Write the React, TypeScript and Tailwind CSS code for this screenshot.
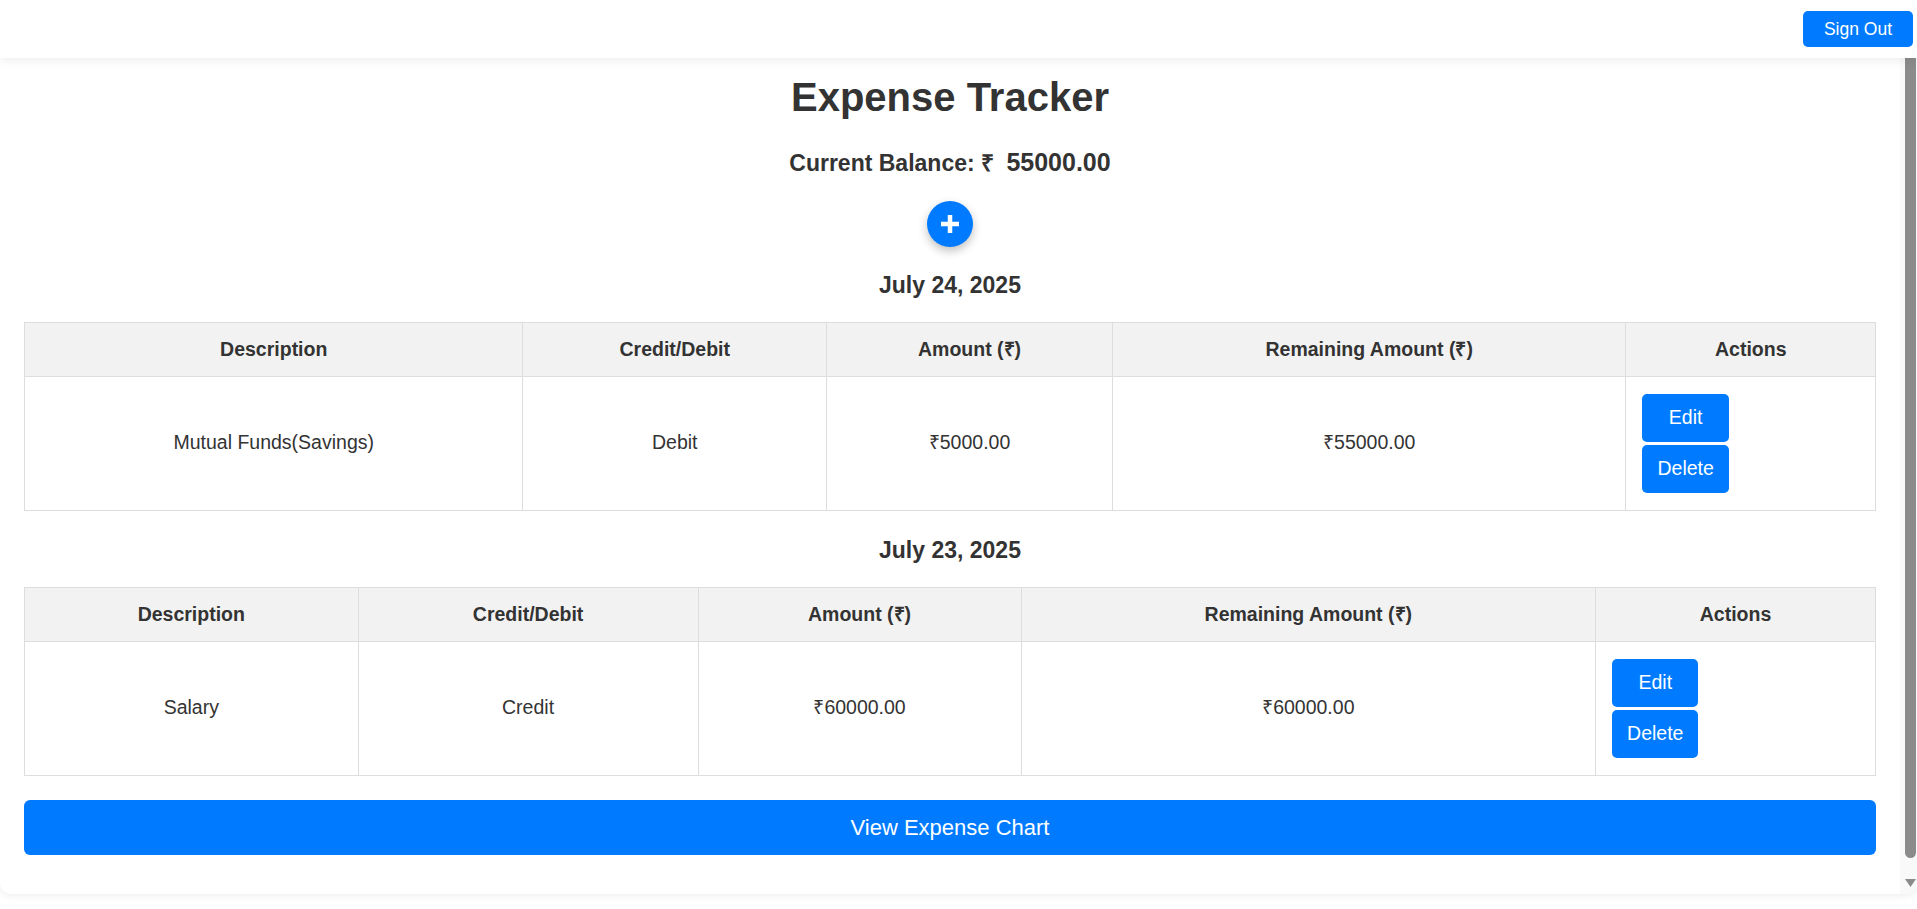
import React from 'react';

type Txn = {
    date: string;
    description: string;
    type: string;
    amount: string;
    remaining: string;
    widths: string[];
};

const transactions: Txn[] = [
    {
        date: 'July 24, 2025',
        description: 'Mutual Funds(Savings)',
        type: 'Debit',
        amount: '₹5000.00',
        remaining: '₹55000.00',
        widths: ['w-[26.93%]', 'w-[16.4%]', 'w-[15.45%]', 'w-[27.74%]', 'w-[13.48%]'],
    },
    {
        date: 'July 23, 2025',
        description: 'Salary',
        type: 'Credit',
        amount: '₹60000.00',
        remaining: '₹60000.00',
        widths: ['w-[18.02%]', 'w-[18.37%]', 'w-[17.45%]', 'w-[31.04%]', 'w-[15.12%]'],
    },
];

const headers = ['Description', 'Credit/Debit', 'Amount (₹)', 'Remaining Amount (₹)', 'Actions'];

function DayTable({ txn, first }: { txn: Txn; first: boolean }) {
    return (
        <div className={first ? 'mt-[24px]' : 'mt-[25px]'}>
            <h3 className="text-center text-[23px] leading-[28px] font-bold text-[#333]">{txn.date}</h3>
            <table className="mt-[23px] w-full table-fixed border-collapse text-[19.5px] text-[#333]">
                <thead>
                    <tr className="bg-[#f2f2f2]">
                        {headers.map((h, i) => (
                            <th key={h} className={`${txn.widths[i]} border border-[#ddd] px-4 py-[15.5px] text-center font-bold leading-[22px]`}>
                                {h}
                            </th>
                        ))}
                    </tr>
                </thead>
                <tbody>
                    <tr>
                        <td className="border border-[#ddd] px-4 py-[17px] text-center">{txn.description}</td>
                        <td className="border border-[#ddd] px-4 py-[17px] text-center">{txn.type}</td>
                        <td className="border border-[#ddd] px-4 py-[17px] text-center">{txn.amount}</td>
                        <td className="border border-[#ddd] px-4 py-[17px] text-center">{txn.remaining}</td>
                        <td className="border border-[#ddd] px-4 py-[17px] text-left">
                            <div className="inline-flex flex-col gap-[3px]">
                                <button className="h-[48px] rounded-[5px] bg-[#007bff] px-[15px] text-[19.5px] text-white">Edit</button>
                                <button className="h-[48px] rounded-[5px] bg-[#007bff] px-[15px] text-[19.5px] text-white">Delete</button>
                            </div>
                        </td>
                    </tr>
                </tbody>
            </table>
        </div>
    );
}

export default function App() {
    return (
        <div className="relative h-screen overflow-hidden bg-white font-['Liberation_Sans',Arial,sans-serif]">
            {/* fixed top bar sits over the scroll card */}
            <header className="absolute inset-x-0 top-0 z-10 flex h-[58px] items-center justify-end bg-white pr-[4px] shadow-[0_2px_10px_rgba(0,0,0,0.08)]">
                <button className="h-[36px] w-[110px] rounded-[5px] bg-[#007bff] text-[17.5px] text-white">Sign Out</button>
            </header>

            <div className="flex h-[894px] overflow-hidden rounded-b-[10px] bg-white shadow-[0_0_10px_rgba(0,0,0,0.1)]">
                <div className="min-w-0 flex-1 px-[24px] pt-[74px]">
                    <h1 className="text-center text-[40px] leading-[46px] font-bold text-[#333]">Expense Tracker</h1>
                    <h2 className="mt-[28px] text-center text-[23px] leading-[28px] font-bold text-[#333]">
                        Current Balance: ₹ <span className="ml-[6px] text-[25px]">55000.00</span>
                    </h2>
                    <div className="mt-[23.5px] flex justify-center">
                        <button className="flex h-[46px] w-[46px] items-center justify-center rounded-full bg-[#007bff] shadow-[0_4px_10px_rgba(0,0,0,0.25)]">
                            <svg width="18" height="18" viewBox="0 0 18 18">
                                <path d="M9 0v18M0 9h18" stroke="white" strokeWidth="4.5" />
                            </svg>
                        </button>
                    </div>

                    {transactions.map((t, i) => (
                        <DayTable key={t.date} txn={t} first={i === 0} />
                    ))}

                    <button className="mt-[24.5px] h-[55px] w-full rounded-[6px] bg-[#007bff] text-[22px] text-white">
                        View Expense Chart
                    </button>
                </div>

                {/* scroll rail */}
                <div className="flex w-[17px] shrink-0 flex-col bg-[#f9f9f9]">
                    <div className="ml-[5px] h-[858px] w-[11px] rounded-b-full bg-[#8b8b8b]" />
                    <svg className="mt-[21px] ml-[5px]" width="11" height="8" viewBox="0 0 11 8">
                        <path d="M0 0h11L5.5 8z" fill="#8b8b8b" />
                    </svg>
                </div>
            </div>
        </div>
    );
}
